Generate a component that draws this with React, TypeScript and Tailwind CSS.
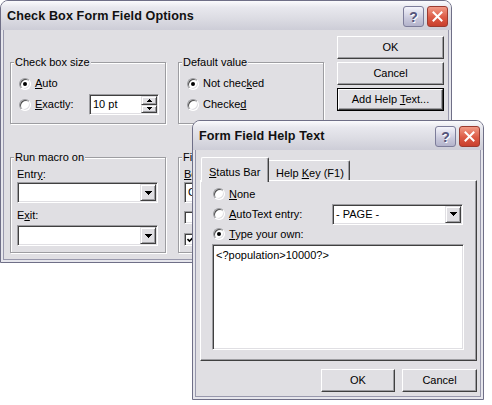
import React from "react";

const raised =
  "border border-t-white border-l-white border-r-[#404040] border-b-[#404040] shadow-[inset_-1px_-1px_0_#9d9da1]";
const sunken =
  "border border-t-[#9d9da1] border-l-[#9d9da1] border-r-white border-b-white shadow-[inset_1px_1px_0_#404040,inset_-1px_-1px_0_#e0dfe3]";

function Arrow({ up }: { up?: boolean }) {
  return (
    <svg width="7" height="4" viewBox="0 0 7 4" shapeRendering="crispEdges">
      <polygon points={up ? "0,4 7,4 3.5,0" : "0,0 7,0 3.5,4"} fill="#000" />
    </svg>
  );
}

function TitleBar({ title }: { title: string }) {
  return (
    <div className="flex h-[29px] shrink-0 items-center bg-[linear-gradient(to_bottom,#fbfbfd_0%,#e8e8ee_22%,#dcdce3_60%,#cdcdd7_100%)] pl-[6px] pr-[3px]">
      <span className="flex-1 pt-[1px] text-[12.6px] font-bold tracking-[0.1px] text-[#111]">{title}</span>
      <div className="mt-[2px] flex gap-[3px]">
        <div className="flex h-[21px] w-[21px] items-center justify-center rounded-[3px] border border-[#7d7d9a] bg-[linear-gradient(to_bottom,#f4f4fb,#c9c9dc_60%,#b3b3cb)] text-[14px] font-bold leading-none text-[#55557a] [text-shadow:1px_1px_0_#fff]">
          ?
        </div>
        <div className="flex h-[21px] w-[21px] items-center justify-center rounded-[3px] border border-[#9b3b30] bg-[linear-gradient(to_bottom,#f19a86,#dc5a45_55%,#c9402e)]">
          <svg width="11" height="11" viewBox="0 0 11 11">
            <path d="M1.5 1.5 L9.5 9.5 M9.5 1.5 L1.5 9.5" stroke="#fff" strokeWidth="2" strokeLinecap="square" />
          </svg>
        </div>
      </div>
    </div>
  );
}

function Window({ className, title, children }: { className: string; title: string; children: React.ReactNode }) {
  return (
    <div className={`absolute flex flex-col overflow-hidden rounded-t-[8px] border border-[#6f6f87] bg-[#e6e6ec] ${className}`}>
      <TitleBar title={title} />
      <div className="mx-[2px] mb-[2px] flex flex-1 flex-col border border-t-0 border-[#9898ac] bg-[#e0dfe3]">
        {children}
      </div>
    </div>
  );
}

function Radio({ on }: { on?: boolean }) {
  return (
    <span className="flex h-[12px] w-[12px] shrink-0 items-center justify-center rounded-full border border-t-[#9d9da1] border-l-[#9d9da1] border-r-white border-b-white bg-white shadow-[inset_1px_1px_0_#505050,inset_-1px_-1px_0_#e0dfe3]">
      {on && <span className="h-[4px] w-[4px] rounded-full bg-black" />}
    </span>
  );
}

function Check({ on }: { on?: boolean }) {
  return (
    <span className={`flex h-[13px] w-[13px] shrink-0 items-center justify-center bg-white ${sunken}`}>
      {on && (
        <svg width="7" height="7" viewBox="0 0 7 7">
          <path d="M0.5 3 L2.5 5 L6.5 1" stroke="#000" strokeWidth="1.6" fill="none" />
        </svg>
      )}
    </span>
  );
}

function Btn({ children, className, focus }: { children: React.ReactNode; className: string; focus?: boolean }) {
  if (focus) {
    return (
      <div className={`flex border border-black ${className}`}>
        <div className={`flex flex-1 items-center justify-center ${raised}`}>{children}</div>
      </div>
    );
  }
  return <div className={`flex items-center justify-center ${raised} ${className}`}>{children}</div>;
}

function DropBtn() {
  return (
    <div className="flex w-[16px] shrink-0 items-center justify-center border border-t-[#e0dfe3] border-l-[#e0dfe3] border-r-[#404040] border-b-[#404040] bg-[#e0dfe3] shadow-[inset_1px_1px_0_#fff,inset_-1px_-1px_0_#9d9da1]">
      <Arrow />
    </div>
  );
}

function Combo({ className, text }: { className: string; text?: string }) {
  return (
    <div className={`flex h-[21px] bg-white p-[1px] ${sunken} ${className}`}>
      <span className="flex-1 overflow-hidden whitespace-nowrap pl-[2px] pt-[1px] leading-[15px]">{text}</span>
      <DropBtn />
    </div>
  );
}

function Group({ label, className, children }: { label: string; className: string; children?: React.ReactNode }) {
  return (
    <div className={`relative border border-[#9d9da1] shadow-[inset_1px_1px_0_#fff,1px_1px_0_#fff] ${className}`}>
      <span className="absolute -top-[8px] left-[3px] bg-[#e0dfe3] px-[1px] leading-[14px]">{label}</span>
      {children}
    </div>
  );
}

export default function App() {
  return (
    <div className="relative h-[405px] w-[492px] overflow-hidden bg-white font-['Liberation_Sans',Arial,sans-serif] text-[11px] text-black">
      <Window className="left-0 top-0 h-[263px] w-[452px]" title="Check Box Form Field Options">
        <div className="flex items-start pl-[6px] pt-[6px]">
          <div className="mt-[26px] grid grid-cols-[156px_146px] grid-rows-[62px_96px] gap-x-[12px] gap-y-[33px]">
            <Group label="Check box size" className="flex flex-col pl-[8px] pt-[10px]">
              <div className="flex h-[21px] items-center gap-[4px]">
                <Radio on />
                <span>
                  <u>A</u>uto
                </span>
              </div>
              <div className="flex h-[21px] items-center">
                <div className="flex w-[70px] items-center gap-[4px]">
                  <Radio />
                  <span>
                    <u>E</u>xactly:
                  </span>
                </div>
                <div className={`flex h-[21px] w-[70px] bg-white p-[1px] ${sunken}`}>
                  <span className="flex-1 pl-[2px] pt-[1px] leading-[15px]">10 pt</span>
                  <div className="flex w-[16px] flex-col">
                    <div className="flex flex-1 items-center justify-center border border-t-[#e0dfe3] border-l-[#e0dfe3] border-r-[#404040] border-b-[#404040] bg-[#e0dfe3] shadow-[inset_1px_1px_0_#fff,inset_-1px_-1px_0_#9d9da1]">
                      <svg width="5" height="3" viewBox="0 0 5 3" shapeRendering="crispEdges">
                        <polygon points="0,3 5,3 2.5,0" fill="#000" />
                      </svg>
                    </div>
                    <div className="flex flex-1 items-center justify-center border border-t-[#e0dfe3] border-l-[#e0dfe3] border-r-[#404040] border-b-[#404040] bg-[#e0dfe3] shadow-[inset_1px_1px_0_#fff,inset_-1px_-1px_0_#9d9da1]">
                      <svg width="5" height="3" viewBox="0 0 5 3" shapeRendering="crispEdges">
                        <polygon points="0,0 5,0 2.5,3" fill="#000" />
                      </svg>
                    </div>
                  </div>
                </div>
              </div>
            </Group>

            <Group label="Default value" className="flex flex-col pl-[8px] pt-[10px]">
              <div className="flex h-[21px] items-center gap-[4px]">
                <Radio on />
                <span>
                  Not chec<u>k</u>ed
                </span>
              </div>
              <div className="flex h-[21px] items-center gap-[4px]">
                <Radio />
                <span>
                  Checke<u>d</u>
                </span>
              </div>
            </Group>

            <Group label="Run macro on" className="flex flex-col px-[6px] pt-[9px]">
              <span className="h-[14px] leading-[14px]">
                Entr<u>y</u>:
              </span>
              <Combo className="mt-[1px] w-[141px]" />
              <span className="mt-[5px] h-[14px] leading-[14px]">
                E<u>x</u>it:
              </span>
              <Combo className="mt-[3px] w-[141px]" />
            </Group>

            <Group label="Field settings" className="flex flex-col pl-[5px] pt-[9px]">
              <span className="h-[14px] leading-[14px]">
                <u>B</u>ookmark:
              </span>
              <div className={`mt-[1px] flex h-[21px] w-[120px] items-center bg-white pl-[3px] ${sunken}`}>Check1</div>
              <div className="mt-[6px] flex h-[16px] items-center gap-[4px]">
                <Check />
                <span>Calculate on exit</span>
              </div>
              <div className="mt-[6px] flex h-[16px] items-center gap-[4px]">
                <Check on />
                <span>Check box enabled</span>
              </div>
            </Group>
          </div>

          <div className="ml-[13px] flex flex-col gap-[3px]">
            <Btn className="h-[23px] w-[107px]">OK</Btn>
            <Btn className="h-[23px] w-[107px]">Cancel</Btn>
            <Btn className="h-[23px] w-[107px]" focus>
              <span>
                Add Help <u>T</u>ext...
              </span>
            </Btn>
          </div>
        </div>
      </Window>

      <Window className="left-[192px] top-[120px] h-[280px] w-[292px]" title="Form Field Help Text">
        <div className="flex flex-1 flex-col pl-[4px] pr-[3px] pt-[7px]">
          <div className="flex h-[23px] items-end pl-[1px]">
            <div className="relative z-10 -mb-[2px] flex h-[25px] w-[68px] items-start rounded-t-[2px] border border-b-0 border-t-white border-l-white border-r-[#404040] bg-[#e0dfe3] pl-[7px] pt-[6px] shadow-[inset_-1px_0_0_#9d9da1]">
              <span>
                <u>S</u>tatus Bar
              </span>
            </div>
            <div className="flex h-[20px] w-[81px] items-start rounded-tr-[2px] border border-b-0 border-l-0 border-t-white border-r-[#404040] pl-[7px] pt-[4px] shadow-[inset_-1px_0_0_#9d9da1]">
              <span>
                Help <u>K</u>ey (F1)
              </span>
            </div>
          </div>
          <div className={`flex h-[181px] flex-col pl-[12px] pt-[3px] ${raised}`}>
            <div className="flex h-[20px] items-center gap-[4px]">
              <Radio />
              <span>
                <u>N</u>one
              </span>
            </div>
            <div className="flex h-[20px] items-center">
              <div className="flex w-[119px] items-center gap-[4px]">
                <Radio />
                <span>
                  <u>A</u>utoText entry:
                </span>
              </div>
              <Combo className="w-[131px]" text="- PAGE -" />
            </div>
            <div className="flex h-[20px] items-center gap-[4px]">
              <Radio on />
              <span>
                <u>T</u>ype your own:
              </span>
            </div>
            <div className={`-ml-[1px] h-[106px] w-[252px] bg-white pl-[3px] pt-[2px] ${sunken}`}>
              &lt;?population&gt;10000?&gt;
            </div>
          </div>
          <div className="mt-[8px] flex justify-end gap-[7px]">
            <Btn className="h-[23px] w-[74px]">OK</Btn>
            <Btn className="h-[23px] w-[75px]">Cancel</Btn>
          </div>
        </div>
      </Window>
    </div>
  );
}
